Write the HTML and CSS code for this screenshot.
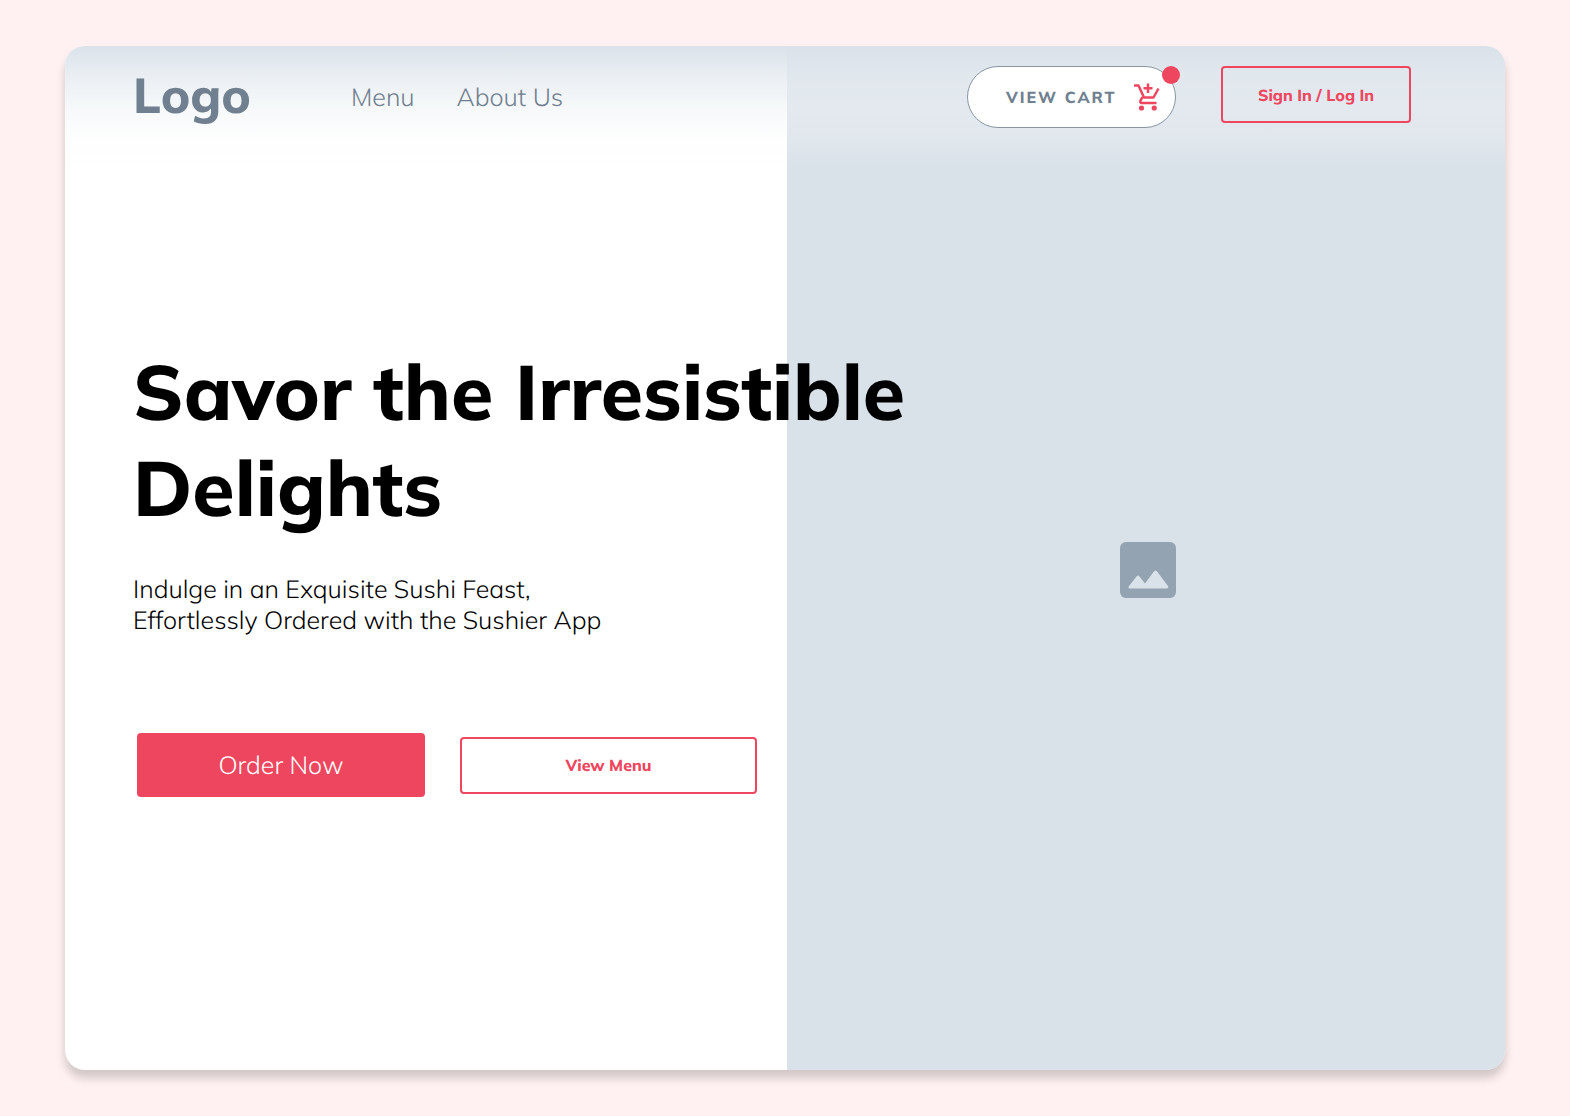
FILE: index.html
```html
<!DOCTYPE html>
<html lang="en">
<head>
  <meta charset="utf-8">
  <meta name="viewport" content="width=device-width, initial-scale=1">
  <title>Sushier</title>
  <link rel="stylesheet" href="styles.css">
</head>
<body>
  <div class="card">
    <div class="photo">
      <svg class="photo-icon" viewBox="0 0 56 56" aria-hidden="true">
        <rect width="56" height="56" rx="6" fill="#94a3b2"/>
        <path d="M9 44 16.500 34.500Q18 32.500 19.500 34.500L25 41.500 33.500 30Q35.500 27 37.500 30L48 44Q49 46.500 46.500 46.500H10Q7.500 46.500 9 44Z" fill="#dae2e9"/>
      </svg>
    </div>

    <header class="header">
      <a class="logo" href="#">Logo</a>
      <nav class="nav">
        <a href="#menu">Menu</a>
        <a href="#about">About Us</a>
      </nav>
      <div class="actions">
        <button class="cart" type="button">
          View Cart
          <svg class="cart-icon" viewBox="0 0 26 28" fill="none" stroke="#ee465e" stroke-width="2.500" stroke-linejoin="round" aria-hidden="true">
            <path d="M0 2.500H4.500L10 14.500H19.500L24.500 5.500"/>
            <path d="M8.500 14 6.400 17.800Q5.800 20 8 20H22.500"/>
            <path d="M14 .5V10M9.500 5.200H18.500"/>
            <circle cx="7.500" cy="25" r="2.600" fill="#ee465e" stroke="none"/>
            <circle cx="20.200" cy="25" r="2.600" fill="#ee465e" stroke="none"/>
          </svg>
          <span class="badge"></span>
        </button>
        <button class="button outline sign-in" type="button">Sign In / Log In</button>
      </div>
    </header>

    <main class="hero">
      <h1>Savor the Irresistible<br>Delights</h1>
      <p>Indulge in an Exquisite Sushi Feast,<br>Effortlessly Ordered with the Sushier App</p>
      <div class="hero-actions">
        <button class="button solid" type="button">Order Now</button>
        <button class="button outline view-menu" type="button">View Menu</button>
      </div>
    </main>
  </div>
</body>
</html>
```
FILE: styles.css
```css
* {
  box-sizing: border-box;
}

body {
  margin: 0;
  min-height: 100vh;
  padding: 46px 65px;
  display: flex;
  background: #fff1f1;
  color: #000;
  font-family: Mulish, Lato, sans-serif;
  font-weight: 350;
  text-rendering: geometricPrecision;
}

h1,
p {
  margin: 0;
  white-space: nowrap;
}

a {
  color: inherit;
  text-decoration: none;
}

button {
  font-family: inherit;
  text-rendering: inherit;
  cursor: pointer;
}

.card {
  flex: 1;
  display: grid;
  grid-template-columns: minmax(0, 722fr) minmax(0, 718fr);
  grid-template-rows: 120px 1fr;
  overflow: hidden;
  border-radius: 20px;
  background: #fff;
  box-shadow: 0 8px 10px rgba(0, 0, 0, 0.18);
}

.photo {
  grid-area: 1 / 2 / 3 / 3;
  display: flex;
  align-items: center;
  justify-content: center;
  padding: 24px 0 0 4px;
  background: #dae2e9;
}

.photo-icon {
  width: 56px;
  height: 56px;
}

.header {
  grid-area: 1 / 1 / 2 / 3;
  display: flex;
  align-items: flex-start;
  padding: 20px 94px 0 68px;
  color: #708090;
  background: linear-gradient(
    #dae2e9,
    rgba(227, 233, 239, 0.75) 25%,
    rgba(236, 241, 244, 0.5) 50%,
    rgba(246, 248, 250, 0.25) 75%,
    rgba(255, 255, 255, 0)
  );
}

.logo {
  width: 218px;
  font-size: 49px;
  font-weight: 800;
  line-height: 60px;
}

.nav {
  display: flex;
  gap: 42px;
  font-size: 25px;
  line-height: 64px;
}

.actions {
  display: flex;
  align-items: flex-start;
  gap: 45px;
  margin-left: auto;
}

.cart {
  position: relative;
  display: flex;
  align-items: center;
  justify-content: space-between;
  width: 209px;
  height: 62px;
  padding: 0 15px 0 38px;
  border: 1px solid #8795a3;
  border-radius: 31px;
  background: #fff;
  color: #708090;
  font-size: 16px;
  font-weight: 800;
  letter-spacing: 2px;
  text-transform: uppercase;
}

.cart-icon {
  width: 26px;
  height: 28px;
}

.badge {
  position: absolute;
  top: -1px;
  right: -5px;
  width: 18px;
  height: 18px;
  border-radius: 50%;
  background: #ee465e;
}

.button {
  height: 57px;
  border-radius: 4px;
  font-size: 16px;
  font-weight: 800;
}

.outline {
  border: 2px solid #ee465e;
  background: transparent;
  color: #ee465e;
}

.solid {
  width: 288px;
  height: 64px;
  border: 0;
  background: #ee465e;
  color: #fff;
  font-size: 25px;
  font-weight: 350;
}

.sign-in {
  width: 190px;
}

.view-menu {
  width: 297px;
}

.hero {
  grid-area: 2 / 1 / 3 / 2;
  padding: 178px 0 0 68px;
}

h1 {
  font-size: 77px;
  font-weight: 780;
  line-height: 96px;
}

p {
  margin-top: 38px;
  font-size: 25px;
  line-height: 31px;
}

.hero-actions {
  display: flex;
  align-items: center;
  gap: 35px;
  margin-top: 97px;
  padding-left: 4px;
}
```
